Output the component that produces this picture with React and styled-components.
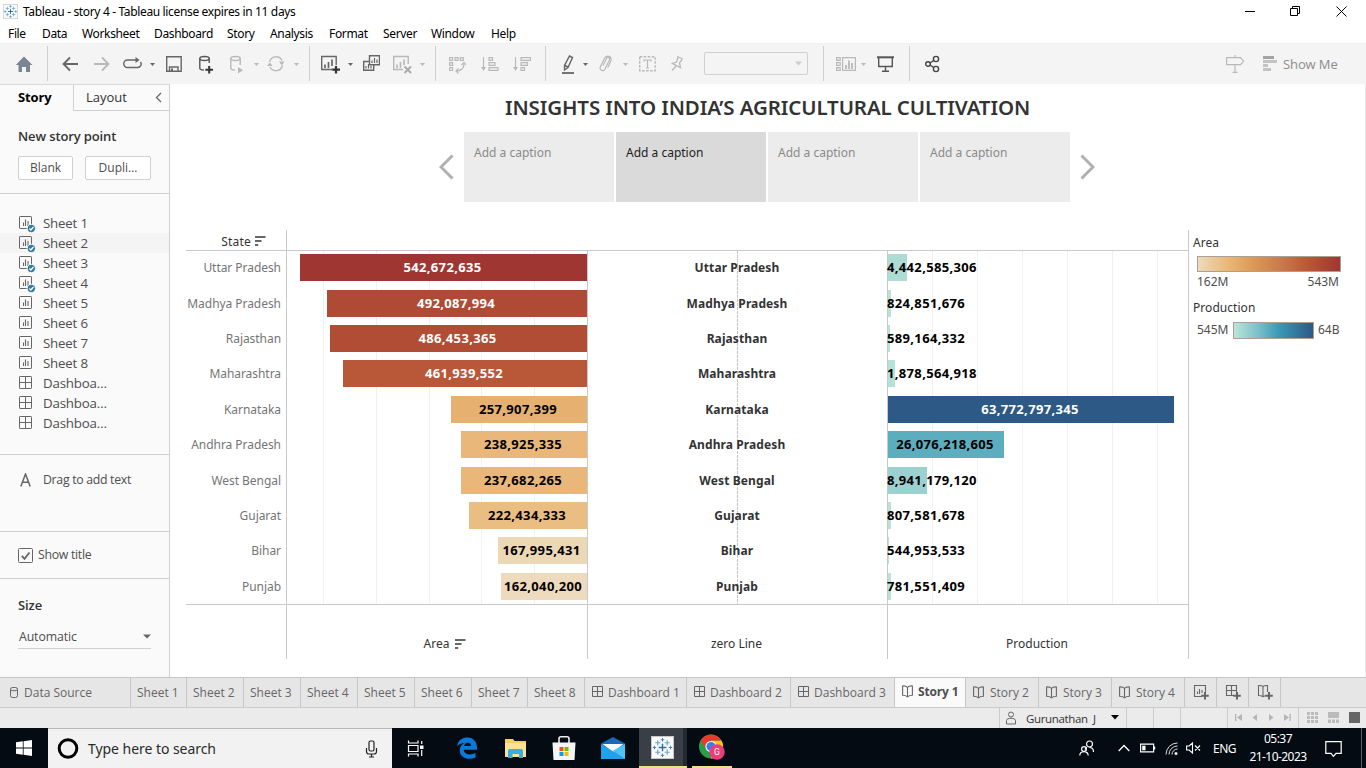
import React from "react";
import styled, { createGlobalStyle, css } from "styled-components";

const Global = createGlobalStyle`
  * { box-sizing: border-box; }
  html, body { margin: 0; padding: 0; }
  body { width: 1366px; height: 768px; overflow: hidden; background: #fff; }
  svg { display: block; flex: none; }
`;

const ui = `"Open Sans", "Noto Sans", sans-serif`;
const noto = `"Noto Sans", "Open Sans", sans-serif`;

const Window = styled.div`
  width: 1366px;
  height: 768px;
  display: flex;
  flex-direction: column;
  background: #fff;
  font-family: ${ui};
  color: #333;
  white-space: nowrap;
  overflow: hidden;
`;

/* ---------- title and menu ---------- */
const TitleBar = styled.header`
  height: 24px;
  flex: none;
  display: flex;
  align-items: center;
  padding: 0 19px 2px 3px;
  font: 12px/18px ${noto};
  letter-spacing: -0.35px;
  color: #000;
`;
const TitleText = styled.span`
  margin-left: 5px;
  flex: 1;
  padding-top: 2px;
`;
const WinControls = styled.div`
  display: flex;
  gap: 35px;
`;
const MenuBar = styled.nav`
  height: 19px;
  flex: none;
  display: flex;
  padding-left: 8px;
  font: 12px/20px ${noto};
  letter-spacing: -0.35px;
  color: #000;
`;
const MenuItem = styled.span`
  width: ${(p) => p.$w}px;
`;

/* ---------- toolbar ---------- */
const Bar = styled.div`
  height: 41px;
  flex: none;
  display: flex;
  align-items: center;
  background: #f4f4f4;
  box-shadow: inset 0 1px #efefef;
`;
const Tool = styled.span`
  margin-left: ${(p) => p.$gap}px;
  flex: none;
`;
const Sep = styled.i`
  width: 1px;
  height: 35px;
  background: #d0d0d0;
  margin-left: ${(p) => p.$gap}px;
`;
const Combo = styled.div`
  width: 104px;
  height: 23px;
  margin-left: 20px;
  border: 1px solid #d0d0d0;
  border-radius: 2px;
  display: flex;
  align-items: center;
  justify-content: flex-end;
  padding-right: 5px;
`;
const ShowMe = styled.span`
  margin-left: 6px;
  font-size: 13px;
  letter-spacing: -0.1px;
  color: #8c8c8c;
`;

/* ---------- sidebar ---------- */
const Body = styled.div`
  height: 593px;
  flex: none;
  display: flex;
`;
const Side = styled.aside`
  width: 170px;
  background: #fafafa;
  border-right: 1px solid #d0d0d0;
  border-top: 1px solid #d9d9d9;
  font-size: 13px;
  color: #4e4e4e;
`;
const SideTabs = styled.div`
  display: flex;
  height: 26px;
`;
const SideTab = styled.div`
  display: flex;
  align-items: center;
  ${(p) =>
    p.$on
      ? css`
          width: 73px;
          padding: 0 0 2px 18px;
          font-weight: 700;
          color: #000;
          letter-spacing: -0.1px;
        `
      : css`
          flex: 1;
          padding: 0 7px 1px 12px;
          justify-content: space-between;
          border-left: 1px solid #d0d0d0;
          border-bottom: 1px solid #d0d0d0;
          color: #333;
        `}
`;
const Section = styled.section`
  height: ${(p) => p.$h}px;
  padding: ${(p) => p.$pad || "0 18px"};
  border-bottom: ${(p) => (p.$last ? "none" : "1px solid #d0d0d0")};
`;
const Heading = styled.h3`
  margin: 0;
  font-size: 13px;
  line-height: 20px;
  font-weight: 600;
  color: #333;
  letter-spacing: -0.12px;
`;
const Buttons = styled.div`
  display: flex;
  gap: 12px;
  margin-top: 10px;
`;
const Button = styled.button`
  width: ${(p) => p.$w}px;
  height: 24px;
  padding: 0 0 2px;
  border: 1px solid #d0d0d0;
  border-radius: 2px;
  background: #fff;
  font: 12px ${ui};
  color: #4e4e4e;
`;
const SheetRow = styled.div`
  height: 20px;
  display: flex;
  align-items: center;
  padding-left: 19px;
  background: ${(p) => (p.$hover ? "#f4f4f4" : "transparent")};
  letter-spacing: -0.2px;
  font-size: 13.3px;
`;
const SheetName = styled.span`
  margin-left: 6px;
`;
const Inline = styled.div`
  display: flex;
  align-items: center;
  gap: ${(p) => p.$gap}px;
  height: ${(p) => p.$h}px;
  font-size: 12.3px;
  letter-spacing: -0.3px;
`;
const InlineText = styled.span`
  padding-bottom: 1px;
`;
const SizeSelect = styled.div`
  display: flex;
  align-items: center;
  justify-content: space-between;
  height: 24px;
  margin-top: 10px;
  padding-left: 1px;
  border-bottom: 1px solid #d0d0d0;
  font-size: 12.3px;
  letter-spacing: -0.1px;
`;

/* ---------- story ---------- */
const Story = styled.main`
  flex: 1;
  border-right: 1px solid #ececec;
  display: flex;
  flex-direction: column;
`;
const StoryTitle = styled.h1`
  margin: 0;
  height: 48px;
  text-align: center;
  font: 600 20.5px/47px ${noto};
  letter-spacing: -0.12px;
  color: #333;
`;
const Points = styled.div`
  height: 70px;
  display: flex;
  justify-content: center;
  align-items: center;
  gap: 10px;
  padding-right: 1px;
`;
const PointList = styled.div`
  display: flex;
  gap: 2px;
`;
const Point = styled.div`
  width: 150px;
  height: 70px;
  padding: 11px 10px;
  background: ${(p) => (p.$on ? "#dadada" : "#ececec")};
  color: ${(p) => (p.$on ? "#1c1c1c" : "#8a8a8a")};
  font: 12px/20px ${noto};
`;

/* ---------- visualisation ---------- */
const VizRow = styled.div`
  display: flex;
  margin: 28px 0 0 16px;
`;
const Viz = styled.div`
  display: grid;
  width: 1003px;
  height: 429px;
  grid-template-columns: 100px 301px 300px 301px;
  grid-template-rows: 20px 355px 54px;
  border-right: 1px solid #c9c9c9;
  font: 12px/20px ${noto};
`;
const StateHead = styled.div`
  display: flex;
  align-items: center;
  justify-content: flex-end;
  gap: 4px;
  padding: 3px 20px 0 0;
  letter-spacing: 0.2px;
  color: #333;
`;
const HeadRest = styled.div`
  grid-column: span 3;
  border-left: 1px solid #c9c9c9;
`;
const Column = styled.div`
  display: grid;
  grid-template-columns: 100%;
  grid-template-rows: 36px 35px 35px 36px 35px 36px 35px 35px 36px 34px;
  border-top: 1px solid #c9c9c9;
  border-bottom: 1px solid #c9c9c9;
  border-left: ${(p) => (p.$plain ? "none" : "1px solid #c9c9c9")};
  background-repeat: no-repeat;
  background-size: ${(p) => (p.$dashed ? "1px 4px" : "1px 100%")};
  ${(p) =>
    p.$dashed &&
    css`
      background-image: linear-gradient(#c4c4c4 3px, transparent 3px);
      background-position: 149px 0;
      background-repeat: repeat-y;
    `}
  ${(p) =>
    p.$lines &&
    css`
      background-image: ${p.$lines.map(() => "linear-gradient(#f1f1f1, #f1f1f1)").join(", ")};
      background-position: ${p.$lines.map((x) => `${x}px 0`).join(", ")};
    `}
`;
const StateName = styled.div`
  text-align: right;
  padding: 7px 5px 0 0;
  color: #757575;
  font-size: 12px;
  letter-spacing: -0.05px;
`;
const MidName = styled.div`
  text-align: center;
  padding: 7px 1px 0 0;
  font-weight: 700;
  letter-spacing: 0.1px;
  color: #333;
`;
const BarCell = styled.div`
  padding-top: 3px;
  display: flex;
  justify-content: ${(p) => (p.$end ? "flex-end" : "flex-start")};
`;
const BarFill = styled.div`
  height: 27px;
  width: ${(p) => p.$w}px;
  background: ${(p) => p.$c};
  color: ${(p) => (p.$light ? "#fff" : "#000")};
  display: flex;
  justify-content: ${(p) => (p.$start ? "flex-start" : "center")};
  padding-right: ${(p) => (p.$start ? 0 : 2)}px;
  text-indent: ${(p) => (p.$start ? -1 : 0)}px;
  font-weight: 700;
  font-size: 13px;
  line-height: 27px;
  letter-spacing: 0.34px;
`;
const AxisTitle = styled.div`
  border-left: ${(p) => (p.$plain ? "none" : "1px solid #c9c9c9")};
  display: flex;
  justify-content: center;
  align-items: center;
  gap: 6px;
  padding: 24px 2px 0 ${(p) => (p.$sorted ? 18 : 0)}px;
  color: #333;
`;
const Legend = styled.div`
  margin-left: 4px;
  width: 150px;
  padding-top: 3px;
  font: 12px/20px ${noto};
  color: #333;
`;
const LegendName = styled.div`
  height: 20px;
  letter-spacing: 0.05px;
`;
const Ramp = styled.div`
  width: ${(p) => p.$w}px;
  height: ${(p) => p.$h}px;
  border: 1px solid #a9a294;
  background: linear-gradient(to right, ${(p) => p.$c});
`;
const AreaRamp = styled.div`
  padding: 3px 0 0 4px;
`;
const Range = styled.div`
  display: flex;
  justify-content: space-between;
  width: 142px;
  margin-bottom: 6px;
  color: #4e4e4e;
`;
const ProdRamp = styled.div`
  display: flex;
  align-items: center;
  gap: 4px;
  padding: 2px 0 0 4px;
  color: #4e4e4e;
`;
const LowEnd = styled.span`
  width: 32px;
`;

/* ---------- sheet tabs and status ---------- */
const Tabs = styled.div`
  height: 31px;
  flex: none;
  display: flex;
  background: #e6e6e6;
  border-top: 1px solid #c6c6c6;
  border-bottom: 1px solid #cbcbcb;
  font-size: 12px;
  color: #666;
`;
const Tab = styled.div`
  width: ${(p) => p.$w}px;
  border-right: 1px solid #c6c6c6;
  display: flex;
  align-items: center;
  gap: ${(p) => p.$gap || 4}px;
  padding: 0 0 ${(p) => (p.$on ? 2 : 1)}px ${(p) => p.$pl}px;
  background: ${(p) => (p.$on ? "#fafafa" : "transparent")};
  font-weight: ${(p) => (p.$on ? 700 : 400)};
  letter-spacing: ${(p) => (p.$on ? "-0.15px" : "0")};
  color: ${(p) => (p.$on ? "#4e4e4e" : "#666")};
`;
const Status = styled.div`
  height: 20px;
  flex: none;
  display: flex;
  justify-content: flex-end;
  background: #ebebeb;
`;
const Cell = styled.div`
  width: ${(p) => p.$w}px;
  border-left: 1px solid #cbcbcb;
  display: flex;
  align-items: center;
  padding: 0 0 1px ${(p) => p.$pl || 0}px;
  font-size: 11.5px;
  letter-spacing: -0.35px;
  color: #333;
`;
const User = styled.span`
  margin: 1px 13px 0 10px;
  width: 72px;
  white-space: pre;
`;

/* ---------- task bar ---------- */
const TaskBar = styled.footer`
  height: 40px;
  flex: none;
  display: flex;
  background: #050b13;
  color: #fff;
  font-family: ${noto};
`;
const StartButton = styled.div`
  width: 48px;
  display: flex;
  align-items: center;
  padding-left: 16px;
`;
const Search = styled.div`
  width: 344px;
  display: flex;
  align-items: center;
  padding: 0 14px 0 9px;
  background: #f2f2f2;
  border-top: 1px solid #b8b8b8;
  color: #2a2a2a;
  font-size: 14px;
  letter-spacing: -0.05px;
`;
const SearchText = styled.span`
  flex: 1;
  margin-left: 8px;
`;
const TaskIcon = styled.div`
  width: ${(p) => p.$w}px;
  margin-left: ${(p) => p.$gap || 0}px;
  display: flex;
  align-items: center;
  justify-content: center;
  border-bottom: ${(p) => (p.$open ? "2px solid #f8dc8c" : "none")};
  background: ${(p) => (p.$active ? "linear-gradient(to right, #3a3f47 44px, #24282f 44px)" : "transparent")};
  padding-right: ${(p) => (p.$active ? 2 : 0)}px;
`;
const Tray = styled.div`
  margin-left: auto;
  display: flex;
  align-items: center;
`;
const Lang = styled.span`
  font-size: 12px;
  width: 35px;
  margin-left: 12px;
  letter-spacing: -0.5px;
`;
const Clock = styled.div`
  width: 60px;
  font-size: 12px;
  line-height: 18px;
  text-align: center;
  letter-spacing: -0.55px;
`;
const Peek = styled.i`
  width: 1px;
  height: 40px;
  margin-left: 19px;
  margin-right: 4px;
  background: #5a5f66;
`;

/* ---------- icons ---------- */
const Svg = ({ w, h = 23, c = "#666", sw = 1.4, children }) => (
  <svg width={w} height={h} viewBox={`0 0 ${w} ${h}`} fill="none" stroke={c} strokeWidth={sw}>
    {children}
  </svg>
);
const DIM = "#b9b9b9";

const Caret = ({ gap, c = "#666" }) => (
  <Tool $gap={gap}>
    <Svg w={5} c="none"><path d="M0 11h5l-2.500 3z" fill={c} /></Svg>
  </Tool>
);

const Logo = ({ size }) => (
  <svg width={size} height={size} viewBox="0 0 22 22" stroke="#2c6f9e" fill="none">
    <rect x=".5" y=".5" width="21" height="21" fill="#fafafa" stroke="#c8c8c8" />
    <path d="M11 7.300v7.400M7.300 11h7.400" strokeWidth="1.400" />
    <path d="M6.500 4v5M4 6.500h5M15.500 4v5M13 6.500h5M6.500 13v5M4 15.500h5M15.500 13v5M13 15.500h5" stroke="#6ba3c4" strokeWidth="1.100" />
    <path d="M11 1.800v3.400M9.300 3.500h3.400M11 16.800v3.400M9.300 18.500h3.400M3.300 9.300v3.400M1.700 11h3.300M18.700 9.300v3.400M17 11h3.300" stroke="#4a88b2" />
  </svg>
);

const Sort = () => (
  <svg width="11" height="11" viewBox="0 0 11 11" fill="#666">
    <path d="M0 0h10.500v2H0zM0 4h6.500v2H0zM0 8h3.200v2H0z" />
  </svg>
);

const SheetIcon = ({ used, dash }) => (
  <svg width="18" height="20" viewBox="0 0 18 20" fill="none" stroke="#666">
    <rect x=".5" y="3.500" width="12" height="12" rx=".6" />
    {dash ? (
      <path d="M6.500 3.500v12M.5 9.500h12" />
    ) : (
      <path d="M4.500 13v-3.500M6.500 13V6.500M9 13V8" strokeWidth="1.100" />
    )}
    {used && (
      <>
        <circle cx="12.300" cy="15.500" r="4.200" fill="#317da0" stroke="#fafafa" />
        <path d="M10.400 15.500l1.500 1.500 2.500-3" stroke="#fff" strokeWidth="1.200" />
      </>
    )}
  </svg>
);

const GridIcon = () => (
  <Svg w={12} h={12} c="#666" sw={1}><path d="M.5.5h10v10H.5zM5.500.5v10M.5 5.500h10" /></Svg>
);
const BookPath = "M5.500 2.300C4 1 2 .8.600 1v9.200c1.700 0 3.500.2 4.900 1.600C7 10.400 8.700 10.200 10.400 10.200V1C9 .8 7 1 5.500 2.300zM5.500 2.300v9.500";
const BookIcon = () => (
  <Svg w={12} h={13} c="#666" sw={1.100}><path d={BookPath} /></Svg>
);
const DbIcon = () => (
  <Svg w={9} h={13} c="#666" sw={1}>
    <rect x=".5" y="1.500" width="7" height="10" rx="2" /><path d="M.5 3.800c1.500 1.300 5.500 1.300 7 0" />
  </Svg>
);
const NewIcon = ({ kind }) => (
  <Svg w={18} h={18} c="#666" sw={1.100}>
    {kind === "sheet" && <path d="M9 13.500H1.500v-11h11V9M4.500 11V8.500M6.500 11V6M9 10V7" />}
    {kind === "dash" && <path d="M9 12.500H1.500v-10h10V9M6.500 2.500v10M1.500 7.500h10" />}
    {kind === "story" && <path d="M6 3.500C4.500 2.400 3 2.300 1.500 2.500v10c1.600 0 3 .1 4.500 1.200l2-1M6 3.500v10M6 3.500C7.500 2.400 9 2.300 10.500 2.500V9" />}
    <path d="M12 9v7.500M8.200 12.700h7.600" strokeWidth="2" />
  </Svg>
);

const Toolbar = () => (
  <Bar>
    <Tool $gap={15}><Svg w={18} c="none"><path d="M9 4.500l8.500 8.500H15v7h-4v-5H7v5H3.500v-7H.8z" fill="#7a8592" /></Svg></Tool>
    <Sep $gap={14} />
    <Tool $gap={14}><Svg w={16} sw={1.800}><path d="M8 5.500L1.500 12 8 18.500M1.500 12H16" /></Svg></Tool>
    <Tool $gap={16}><Svg w={16} sw={1.800} c={DIM}><path d="M8 5.500l6.500 6.500L8 18.500M14.500 12H0" /></Svg></Tool>
    <Tool $gap={13}><Svg w={19}><path d="M9 15.500H4.500a3.700 3.700 0 010-7.500H14M8.500 15.500h6a3.500 3.500 0 003-5.500" /><path d="M12.500 5l4 3-4 3z" fill="#666" stroke="none" /></Svg></Tool>
    <Caret gap={8} />
    <Tool $gap={11}><Svg w={16}><path d="M.7 4.700h14.500v14.600H.700zM3.500 19v-4h8.500v4" /><path d="M5 16.500h2v2.500H5z" fill="#666" stroke="none" /></Svg></Tool>
    <Tool $gap={17}><Svg w={14} c="#555"><ellipse cx="5.500" cy="6.500" rx="4.700" ry="2" /><path d="M.8 6.500v9.700c0 1 2 1.800 4.200 1.900M10.200 6.500V11" /><path d="M10.200 14v7.500M6.400 17.700H14" stroke="#333" strokeWidth="2" /></Svg></Tool>
    <Tool $gap={17}><Svg w={13} c={DIM}><ellipse cx="5.500" cy="6.500" rx="4.700" ry="2" /><path d="M.8 6.500v9.700c0 1 2 1.800 4.200 1.900M10.200 6.500V13" /><path d="M8 15l5 3.300-5 3.200z" fill={DIM} stroke="none" /></Svg></Tool>
    <Caret gap={11} c={DIM} />
    <Tool $gap={8}><Svg w={18} c={DIM}><path d="M2.500 10a6.700 6.700 0 0112.500-1.500M15.500 13.500A6.700 6.700 0 013 15" /><path d="M12 9.500h5.500l-2.700 4zM0 14h5.500L3 10.500z" fill={DIM} stroke="none" /></Svg></Tool>
    <Caret gap={9} c={DIM} />
    <Sep $gap={10} />
    <Tool $gap={11}><Svg w={19}><path d="M11 17.500H.7V4.500h14.500V13" /><path d="M4 16v-3.500M7.500 16V10M11 14V7.500" strokeWidth="1.700" /><path d="M15 14v7.500M11.200 17.700H19" stroke="#333" strokeWidth="2.200" /></Svg></Tool>
    <Caret gap={8} />
    <Tool $gap={10}><Svg w={17}><path d="M6.500 3.700h10v9h-10zM6.500 9.500H.7v8.800h10v-5.500" /><path d="M9 11V8.500M11.500 11V6M14 11V7.500M3 16.500V14M5.500 16.500V12M8 16.500V14" strokeWidth="1.200" /></Svg></Tool>
    <Tool $gap={13}><Svg w={19} c={DIM}><path d="M10 17.500H.7V4.500h14.500V12" /><path d="M4 16v-3.500M7.500 16V10M11 13V7.500" strokeWidth="1.700" /><path d="M11.500 14.500l6.500 6.500M18 14.500L11.500 21" stroke="#aaa" strokeWidth="2" /></Svg></Tool>
    <Caret gap={8} c={DIM} />
    <Sep $gap={10} />
    <Tool $gap={13}><Svg w={17} c={DIM} sw={1.200}><path d="M.6 5.600h3v2.800h-3zM6 5.600h3v2.800H6zM11.300 5.600h3v2.800h-3zM.6 10.600h3v2.800h-3zM.6 15.600h3v2.800h-3zM8 19c4 0 7-3 7-7M9.500 16.500L7 19l2.500 2.500M12.500 13L15 10.500l2 2.500" /></Svg></Tool>
    <Tool $gap={15}><Svg w={18} c={DIM} sw={1.200}><path d="M2.500 5v12M8 5.600h3.500v2.800H8zM8 10.600h6v2.800H8zM8 15.600h9v2.800H8z" /><path d="M0 15h5l-2.500 4z" fill={DIM} stroke="none" /></Svg></Tool>
    <Tool $gap={14}><Svg w={18} c={DIM} sw={1.200}><path d="M2.500 5v12M8 5.600h9.500v2.800H8zM8 10.600h6.500v2.800H8zM8 15.600h3.500v2.800H8z" /><path d="M0 15h5l-2.500 4z" fill={DIM} stroke="none" /></Svg></Tool>
    <Sep $gap={14} />
    <Tool $gap={15}><Svg w={14} sw={1.400}><path d="M8.500 4l3 1.500-4.500 10-3.500 2.500v-4.500zM4 13.500l3 1.500" /><path d="M1 21h12" strokeWidth="1.800" /></Svg></Tool>
    <Caret gap={8} />
    <Tool $gap={11}><Svg w={13} c={DIM} sw={1.200}><path d="M4 13.500l3.500-7c1-2 4-.8 3 1.500L6 17c-1.500 3-6 1.200-4.700-2L5.500 6.200c2-4 8.200-1.700 6.300 2.800l-3 6.500" /></Svg></Tool>
    <Caret gap={11} c={DIM} />
    <Tool $gap={11}><Svg w={17} c={DIM}><rect x=".7" y="4.700" width="15.500" height="14" strokeDasharray="2.600 1.400" /><path d="M5 9.500V8h7v1.500M8.500 8v8M7 16h3" strokeWidth="1.200" /></Svg></Tool>
    <Tool $gap={15}><Svg w={13} c={DIM} sw={1.300}><path d="M6 4.500l6 2.500M7 5.500L5.500 10 1.500 11.500l8 4-1-4.500 2.500-3.500M5 14L1 18.500" /></Svg></Tool>
    <Combo><svg width="7" height="5"><path d="M0 .5h7L3.500 4.500z" fill="#ccc" /></svg></Combo>
    <Sep $gap={15} />
    <Tool $gap={12}><Svg w={20} c={DIM} sw={1.200}><path d="M.6 5.600h3.600v2.800H.6zM.6 10.600h3.600v2.800H.6zM.6 15.600h3.600v2.800H.6zM6.600 5.600h12.800v12.800H6.600z" /><path d="M10 17v-4M13 17V8.500M16 17v-6" strokeWidth="1.800" /></Svg></Tool>
    <Caret gap={5} c={DIM} />
    <Tool $gap={11}><Svg w={17} c="#555"><path d="M1.700 6v8.500h13.600V6M8.500 14.500v4.700M5 19.300h7" /><path d="M0 5.300h17" strokeWidth="2" /></Svg></Tool>
    <Sep $gap={15} />
    <Tool $gap={15}><Svg w={15} c="#444"><circle cx="3" cy="12" r="2.300" /><circle cx="11" cy="7" r="2.600" /><circle cx="11" cy="17" r="2.600" /><path d="M5 11l3.700-2.500M5 13l3.700 2.500" /></Svg></Tool>
    <Tool $gap={286}><Svg w={18} c={DIM} sw={1.200}><path d="M.6 5.600h14l3 3.500-3 3.500H.6zM9 3v2.500M9 12.500V20M6.500 20.400H11.500" /></Svg></Tool>
    <Tool $gap={19}><Svg w={14} c="none"><path d="M0 4h11v3H0z" fill="#a3a3a3" /><path d="M0 8h14v3H0zM0 12h5v3H0zM0 16h8v3H0z" fill="#c3c3c3" /></Svg></Tool>
    <ShowMe>Show Me</ShowMe>
  </Bar>
);

const menu = [["File", 34], ["Data", 40], ["Worksheet", 72], ["Dashboard", 73], ["Story", 43], ["Analysis", 59], ["Format", 54], ["Server", 48], ["Window", 60], ["Help", 30]];

const rows = [
  ["Uttar Pradesh", "542,672,635", 287, "#9f3632", true, "4,442,585,306", 19, "#addcd4"],
  ["Madhya Pradesh", "492,087,994", 260, "#af4b35", true, "824,851,676", 3, "#b8e3d9"],
  ["Rajasthan", "486,453,365", 257, "#b14d35", true, "589,164,332", 2, "#b8e3d9"],
  ["Maharashtra", "461,939,552", 244, "#b95838", true, "1,878,564,918", 7, "#b5e2d8"],
  ["Karnataka", "257,907,399", 136, "#e6b170", false, "63,772,797,345", 286, "#2c5985"],
  ["Andhra Pradesh", "238,925,335", 126, "#e8b779", false, "26,076,218,605", 116, "#5caebf"],
  ["West Bengal", "237,682,265", 126, "#e8b779", false, "8,941,179,120", 39, "#9cd1d1"],
  ["Gujarat", "222,434,333", 118, "#eabe83", false, "807,581,678", 3, "#b8e3d9"],
  ["Bihar", "167,995,431", 89, "#edd8b6", false, "544,953,533", 1, "#b8e3d9"],
  ["Punjab", "162,040,200", 86, "#eedabd", false, "781,551,409", 3, "#b8e3d9"],
];

const sheetTabWidths = [56, 57, 57, 57, 57, 57, 56, 57];

export default function App() {
  return (
    <Window>
      <Global />
      <TitleBar>
        <Logo size={15} />
        <TitleText>Tableau - story 4 - Tableau license expires in 11 days</TitleText>
        <WinControls>
          <Svg w={11} h={11} c="#000" sw={1}><path d="M1 5.500h10" /></Svg>
          <Svg w={11} h={11} c="#000" sw={1}><path d="M.5 2.500h7v7h-7zM2.500 2.500v-2h7v7h-2" /></Svg>
          <Svg w={11} h={11} c="#000" sw={1}><path d="M.5.500l10 10M10.500.500l-10 10" /></Svg>
        </WinControls>
      </TitleBar>
      <MenuBar>{menu.map(([t, w]) => <MenuItem key={t} $w={w}>{t}</MenuItem>)}</MenuBar>
      <Toolbar />

      <Body>
        <Side>
          <SideTabs>
            <SideTab $on>Story</SideTab>
            <SideTab>Layout<Svg w={7} h={11} sw={1.300}><path d="M6 1L1.500 5.500 6 10" /></Svg></SideTab>
          </SideTabs>
          <Section $h={83} $pad="15px 18px 0">
            <Heading>New story point</Heading>
            <Buttons><Button $w={55}>Blank</Button><Button $w={66}>Dupli…</Button></Buttons>
          </Section>
          <Section $h={261} $pad="19px 0 0">
            {[1, 2, 3, 4, 5, 6, 7, 8].map((n) => (
              <SheetRow key={n} $hover={n === 2}><SheetIcon used={n < 5} /><SheetName>Sheet {n}</SheetName></SheetRow>
            ))}
            {[1, 2, 3].map((n) => (
              <SheetRow key={n}><SheetIcon dash /><SheetName>Dashboa…</SheetName></SheetRow>
            ))}
          </Section>
          <Section $h={77} $pad="15px 0 0 20px">
            <Inline $gap={12} $h={20}>
              <Svg w={11} h={14} sw={1.500}><path d="M.8 13.500L5.500 1l4.700 12.500M2.300 9.300h6.400" /></Svg>
              <InlineText>Drag to add text</InlineText>
            </Inline>
          </Section>
          <Section $h={47} $pad="13px 18px 0">
            <Inline $gap={5} $h={20}>
              <Svg w={15} h={15} sw={1}><rect x=".5" y=".5" width="14" height="14" rx="1" /><path d="M3.800 7.800l2.700 3 5-6.300" strokeWidth="1.800" /></Svg>
              <InlineText>Show title</InlineText>
            </Inline>
          </Section>
          <Section $h={98} $pad="16px 18px 0" $last>
            <Heading>Size</Heading>
            <SizeSelect>Automatic<svg width="8" height="5"><path d="M0 .5h8L4 4.500z" fill="#666" /></svg></SizeSelect>
          </Section>
        </Side>

        <Story>
          <StoryTitle>INSIGHTS INTO INDIA’S AGRICULTURAL CULTIVATION</StoryTitle>
          <Points>
            <Svg w={15} h={26} c="#b0b0b0" sw={3}><path d="M13.500 1.500L2 13l11.500 11.500" /></Svg>
            <PointList>
              {[0, 1, 2, 3].map((i) => <Point key={i} $on={i === 1}>Add a caption</Point>)}
            </PointList>
            <Svg w={15} h={26} c="#b0b0b0" sw={3}><path d="M1.500 1.500L13 13 1.500 24.500" /></Svg>
          </Points>
          <VizRow>
            <Viz>
              <StateHead>State<Sort /></StateHead>
              <HeadRest />
              <Column $plain>{rows.map((r) => <StateName key={r[0]}>{r[0]}</StateName>)}</Column>
              <Column $lines={[36, 89, 142, 194, 247]}>
                {rows.map((r) => (
                  <BarCell key={r[0]} $end><BarFill $w={r[2]} $c={r[3]} $light={r[4]}>{r[1]}</BarFill></BarCell>
                ))}
              </Column>
              <Column $dashed>{rows.map((r) => <MidName key={r[0]}>{r[0]}</MidName>)}</Column>
              <Column $lines={[44, 89, 134, 179, 224, 269]}>
                {rows.map((r) => (
                  <BarCell key={r[0]}><BarFill $w={r[6]} $c={r[7]} $light={r[6] > 200} $start={r[6] < 100}>{r[5]}</BarFill></BarCell>
                ))}
              </Column>
              <AxisTitle $plain />
              <AxisTitle $sorted>Area<Sort /></AxisTitle>
              <AxisTitle>zero Line</AxisTitle>
              <AxisTitle>Production</AxisTitle>
            </Viz>
            <Legend>
              <LegendName>Area</LegendName>
              <AreaRamp>
                <Ramp $w={144} $h={16} $c="#eedabd, #e8b673 22%, #dc9755 40%, #c97b4d 58%, #b95635 78%, #9f3632" />
                <Range><span>162M</span><span>543M</span></Range>
              </AreaRamp>
              <LegendName>Production</LegendName>
              <ProdRamp><LowEnd>545M</LowEnd><Ramp $w={81} $h={17} $c="#bce4d8, #7bc1ca 30%, #3c9ab5 56%, #2c5985" />64B</ProdRamp>
            </Legend>
          </VizRow>
        </Story>
      </Body>

      <Tabs>
        <Tab $w={131} $pl={10} $gap={5}><DbIcon />Data Source</Tab>
        {sheetTabWidths.map((w, i) => <Tab key={i} $w={w} $pl={6}>Sheet {i + 1}</Tab>)}
        {[102, 104, 104].map((w, i) => <Tab key={i} $w={w} $pl={7}><GridIcon />Dashboard {i + 1}</Tab>)}
        {[71, 73, 73, 73].map((w, i) => <Tab key={i} $w={w} $pl={7} $gap={i ? 5 : 4} $on={i === 0}><BookIcon />Story {i + 1}</Tab>)}
        <Tab $w={32} $pl={8}><NewIcon kind="sheet" /></Tab>
        <Tab $w={32} $pl={8}><NewIcon kind="dash" /></Tab>
        <Tab $w={32} $pl={8}><NewIcon kind="story" /></Tab>
      </Tabs>
      <Status>
        <Cell $w={127} $pl={6}>
          <Svg w={10} h={14} sw={1}><circle cx="5" cy="3.500" r="2.500" /><path d="M.5 13V9.500c0-3 9-3 9 0V13z" /></Svg>
          <User>Gurunathan  J</User>
          <svg width="8" height="5"><path d="M0 0h8L4 4.500z" fill="#000" /></svg>
        </Cell>
        <Cell $w={27} /><Cell $w={27} /><Cell $w={47} />
        <Cell $w={71} $pl={7}>
          <Svg w={56} h={9} c="none">
            <path d="M0 1h1.300v7H0zM7 1v7L2 4.500zM22 1v7l-4.500-3.500zM34 1v7l4.500-3.500zM49 1v7l5-3.500zM54.500 1h1.300v7h-1.300z" fill="#b5b5b5" />
          </Svg>
        </Cell>
        <Cell $w={68} $pl={8}>
          <Svg w={54} h={11} c="none">
            <path d="M0 0h3v3H0zM4 0h3v3H4zM8 0h3v3H8zM0 4h3v3H0zM4 4h3v3H4zM8 4h3v3H8zM0 8h3v3H0zM4 8h3v3H4zM8 8h3v3H8zM21 0h11v6H21zM21 7.500h3V11h-3zM25 7.500h3V11h-3zM29 7.500h3V11h-3z" fill="#bbb" />
            <path d="M42 0h11v11H42z" fill="#666" />
          </Svg>
        </Cell>
      </Status>

      <TaskBar>
        <StartButton>
          <Svg w={16} h={16} c="none"><path d="M0 2.300L6.800 1.300v6.200H0zM7.600 1.200L16 0v7.500H7.600zM0 8.400h6.800v6.300L0 13.700zM7.600 8.400H16V16l-8.400-1.200z" fill="#fff" /></Svg>
        </StartButton>
        <Search>
          <Svg w={23} h={23} c="#000" sw={3}><circle cx="11" cy="11.500" r="8.800" /></Svg>
          <SearchText>Type here to search</SearchText>
          <Svg w={13} h={18} c="#222" sw={1.200}><rect x="4" y="1" width="5" height="10" rx="1.500" /><path d="M1.500 8v3.500c0 1.500 1 2.500 2.500 2.500h5c1.500 0 2.500-1 2.500-2.500V8M6.500 14v3M4 17h5" /></Svg>
        </Search>
        <TaskIcon $w={20} $gap={14}>
          <Svg w={18} h={17} c="#fff" sw={1.200}><path d="M1.500.500V3h9.500V.500M1.500 16.500V14h9.500v2.500M1.500 5.500h9.500v6H1.500zM14.700 1v3M14.700 10v6" /><path d="M13 5.500h3.500V9H13z" fill="#fff" stroke="none" /></Svg>
        </TaskIcon>
        <TaskIcon $w={22} $gap={30}>
          <Svg w={22} h={22} c="none"><path d="M1 9.500C2 3 6.500.500 11.500.500 17.500.500 21 5 21 10.500v2.300H7.800c.2 5.200 7.200 5.700 11.700 3.200v4.500C13 23.500 4 21.500 3.700 13.500c0-3.500 2-6 4.800-7.400C5.500 6.300 2.500 7.500 1 9.500zM8 9h7c0-4.500-6-4.500-7 0z" fill="#0a79d8" /></Svg>
        </TaskIcon>
        <TaskIcon $w={23} $gap={26}>
          <Svg w={23} h={20} c="none"><path d="M1 1h8l1.500 2H22v16H1z" fill="#f4cf63" /><path d="M1 5h21v14H1z" fill="#fde391" /><path d="M4 20v-7c0-1.500 1-2 2-2h11c1 0 2 .5 2 2v7h-4v-4H8.500v4z" fill="#36b0e2" /></Svg>
        </TaskIcon>
        <TaskIcon $w={24} $gap={25}>
          <Svg w={24} h={24} c="none"><path d="M7 7V2.500C7 1 8 .800 9 .800h6c1.300 0 2 .7 2 1.700V7" stroke="#eee" strokeWidth="1.600" /><path d="M.5 6.500h23L22.500 24h-21z" fill="#f5f5f5" /><path d="M7.500 11h4v4h-4z" fill="#ef5022" /><path d="M12.500 11h4v4h-4z" fill="#7eb900" /><path d="M7.500 16h4v4h-4z" fill="#00a3ee" /><path d="M12.500 16h4v4h-4z" fill="#fdb800" /></Svg>
        </TaskIcon>
        <TaskIcon $w={24} $gap={25}>
          <Svg w={24} h={22} c="none"><path d="M12 0l12 6.500V22H0V6.500z" fill="#1a66b8" /><path d="M1.500 7h21L12 15z" fill="#f5f7fa" /><path d="M0 7l12 7.500L24 22H0z" fill="#1fa2ee" /><path d="M24 7L11.500 14 24 22z" fill="#4cc3f7" /></Svg>
        </TaskIcon>
        <TaskIcon $w={48} $gap={14} $active $open><Logo size={23} /></TaskIcon>
        <TaskIcon $w={40} $gap={5} $open>
          <Svg w={26} h={26} c="none">
            <circle cx="12" cy="12.500" r="12" fill="#2a9d49" />
            <path d="M22.400 6.500A12 12 0 0112 24.500l0-12 0-6z" fill="#fbc116" />
            <path d="M1.600 6.500L7 15l5-8.500h10.400A12 12 0 001.600 6.500z" fill="#e33b2e" />
            <circle cx="12" cy="12.500" r="5.600" fill="#fff" />
            <circle cx="12" cy="12.500" r="4.500" fill="#3b7de8" />
            <circle cx="18" cy="18" r="7.700" fill="#ea3d7a" />
            <text x="18" y="21" textAnchor="middle" fontSize="8.500" fontFamily="Roboto, sans-serif" fill="#fff">G</text>
          </Svg>
        </TaskIcon>
        <Tray>
          <Svg w={16} h={16} c="#fff" sw={1.200}><circle cx="10.500" cy="4" r="3" /><path d="M7.800 7.500c-.8.600-1.500 1-1.800 2M10.500 7.500c2.500 0 4 1.800 4 4.500" /><circle cx="5" cy="9" r="2.400" /><path d="M.800 15.500c0-5 8.400-5 8.400 0" /></Svg>
          <Tool $gap={23}><Svg w={12} h={8} c="#fff" sw={1.300}><path d="M.700 7L6 1.500 11.300 7" /></Svg></Tool>
          <Tool $gap={10}><Svg w={16} h={10} c="#fff" sw={1.200}><path d="M.6 1.100h13v7.800H.6zM14.600 3.500v3" /><path d="M2.200 2.700h3.300v4.600H2.200z" fill="#fff" stroke="none" /></Svg></Tool>
          <Tool $gap={9}><Svg w={13} h={13} c="#ddd" sw={1}><path d="M1 12.500A11.500 11.500 0 0112.500 1M4 12.500a8.500 8.500 0 018.500-8.500M7 12.500a5.500 5.500 0 015.500-5.500" /><circle cx="11" cy="11.500" r="1.500" fill="#fff" stroke="none" /></Svg></Tool>
          <Tool $gap={8}><Svg w={15} h={12} c="#fff" sw={1.100}><path d="M.6 4h2.500L6.500 1v10L3.100 8H.6zM9 3.500l5 5M14 3.500l-5 5" /></Svg></Tool>
          <Lang>ENG</Lang>
          <Clock>05:37<br />21-10-2023</Clock>
          <Tool $gap={17}><Svg w={17} h={17} c="#fff" sw={1.200}><path d="M.8 1.600h15.400v11.800H11l-2.500 3-2.500-3H.8z" /></Svg></Tool>
          <Peek />
        </Tray>
      </TaskBar>
    </Window>
  );
}
